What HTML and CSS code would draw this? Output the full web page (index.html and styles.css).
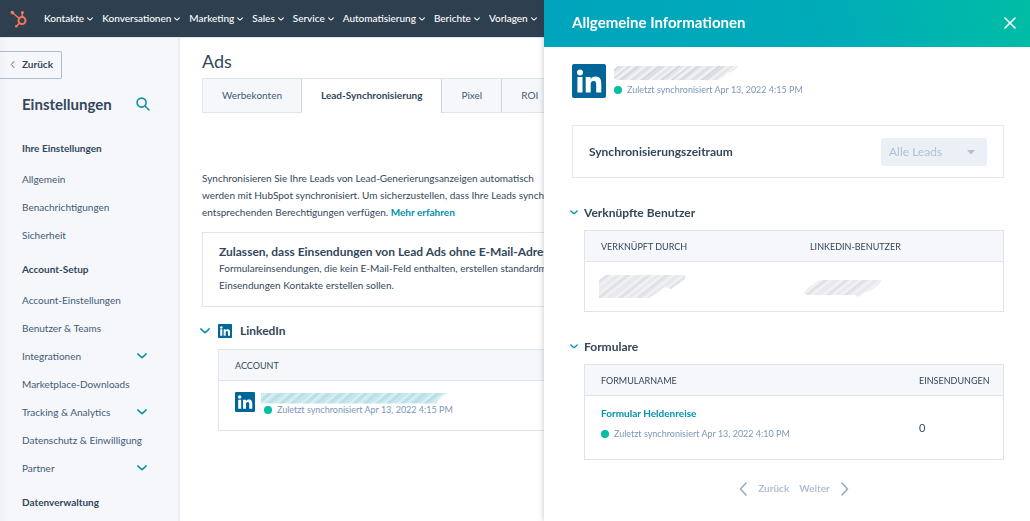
FILE: index.html
```html
<!DOCTYPE html>
<html lang="de">
<head>
<meta charset="utf-8">
<title>Ads – Einstellungen</title>
<link rel="stylesheet" href="styles.css">
</head>
<body>
<svg class="defs" aria-hidden="true">
  <symbol id="chevron" viewBox="0 0 10 6"><path d="M1 1 Q3 3.2 5 4.6 Q7 3.2 9 1" fill="none" stroke="currentColor" stroke-width="1.7" stroke-linecap="round" stroke-linejoin="round"/></symbol>
  <symbol id="angle" viewBox="0 0 8 14"><path d="M7 1 1.5 7 7 13" fill="none" stroke="currentColor" stroke-width="1.6" stroke-linecap="round" stroke-linejoin="round"/></symbol>
  <symbol id="linkedin" viewBox="0 0 34 34">
    <rect width="34" height="34" rx="2" fill="#006699"/>
    <circle cx="8" cy="8.400" r="3" fill="#fff"/>
    <path d="M5.400 13h5.100v15.500H5.400zM13.700 13h4.900v2.200c.8-1.400 2.500-2.600 4.900-2.600 4.900 0 5.800 3.200 5.800 7.400v8.500h-5.100v-7.600c0-1.900-.1-4-2.600-4s-2.900 1.900-2.900 3.900v7.700h-5z" fill="#fff"/>
  </symbol>
  <pattern id="hatch-grey" width="37" height="60" patternUnits="userSpaceOnUse" patternTransform="rotate(52)">
    <rect width="37" height="60" fill="#e4e6ea"/>
    <path d="M2 0v60M8.500 0v60M13 0v60M20 0v60M26.500 0v60M34 0v60" stroke="#f8f9fa" stroke-width="1.300"/>
    <path d="M4 0v60M16 0v60M29 0v60" stroke="#bcc1c9" stroke-width="0.800"/>
    <path d="M10.500 0v60M23 0v60M31.500 0v60" stroke="#cfd3d9" stroke-width="0.800"/>
  </pattern>
  <pattern id="hatch-pale" width="37" height="60" patternUnits="userSpaceOnUse" patternTransform="rotate(52)">
    <rect width="37" height="60" fill="#e7e9ed"/>
    <path d="M2 0v60M9 0v60M15 0v60M21 0v60M28 0v60M34 0v60" stroke="#f7f8fa" stroke-width="1.200"/>
    <path d="M5 0v60M18 0v60M31 0v60" stroke="#ced3da" stroke-width="0.800"/>
  </pattern>
  <pattern id="hatch-teal" width="31" height="60" patternUnits="userSpaceOnUse" patternTransform="rotate(50)">
    <rect width="31" height="60" fill="#c6e6eb"/>
    <path d="M3 0v60M9 0v60M18 0v60M25 0v60" stroke="#e8f6f8" stroke-width="1.100"/>
    <path d="M6 0v60M13 0v60M21 0v60M28 0v60" stroke="#a3d5dd" stroke-width="0.900"/>
  </pattern>
</svg>

<header class="topbar">
  <a class="logo" href="#" aria-label="HubSpot">
    <svg viewBox="0 0 18 18" fill="none" stroke="#f8765c">
      <circle cx="12" cy="10.600" r="3.500" stroke-width="2"/>
      <path d="M12.300 6.500V3M9 8.300 2.500 2.800M9.400 13.200 6.600 16" stroke-width="1.500"/>
      <g fill="#f8765c" stroke="none"><circle cx="12.400" cy="2.400" r="1.500"/><circle cx="2.300" cy="2.600" r="1.800"/><circle cx="6.300" cy="16.200" r="1.300"/></g>
    </svg>
  </a>
  <nav class="nav">
    <button type="button">Kontakte<svg><use href="#chevron"/></svg></button>
    <button type="button">Konversationen<svg><use href="#chevron"/></svg></button>
    <button type="button">Marketing<svg><use href="#chevron"/></svg></button>
    <button type="button">Sales<svg><use href="#chevron"/></svg></button>
    <button type="button">Service<svg><use href="#chevron"/></svg></button>
    <button type="button">Automatisierung<svg><use href="#chevron"/></svg></button>
    <button type="button">Berichte<svg><use href="#chevron"/></svg></button>
    <button type="button">Vorlagen<svg><use href="#chevron"/></svg></button>
  </nav>
</header>

<div class="layout">
  <aside class="sidebar">
    <button class="back" type="button"><svg><use href="#angle"/></svg>Zurück</button>
    <div class="side-title">
      <h2>Einstellungen</h2>
      <button type="button" aria-label="Suchen"><svg viewBox="0 0 14 14" fill="none" stroke="#0e91a7" stroke-width="1.600" stroke-linecap="round"><circle cx="5.600" cy="5.600" r="4.500"/><path d="m9 9 4 4"/></svg></button>
    </div>
    <section class="group">
      <h3>Ihre Einstellungen</h3>
      <a href="#">Allgemein</a>
      <a href="#">Benachrichtigungen</a>
      <a href="#">Sicherheit</a>
    </section>
    <section class="group">
      <h3>Account-Setup</h3>
      <a href="#">Account-Einstellungen</a>
      <a href="#">Benutzer &amp; Teams</a>
      <a href="#">Integrationen<svg><use href="#chevron"/></svg></a>
      <a href="#">Marketplace-Downloads</a>
      <a href="#">Tracking &amp; Analytics<svg><use href="#chevron"/></svg></a>
      <a href="#">Datenschutz &amp; Einwilligung</a>
      <a href="#">Partner<svg><use href="#chevron"/></svg></a>
    </section>
    <section class="group">
      <h3>Datenverwaltung</h3>
    </section>
  </aside>

  <main class="main">
    <h1>Ads</h1>
    <div class="tabs" role="tablist">
      <button type="button" role="tab">Werbekonten</button>
      <button type="button" role="tab" class="active" aria-selected="true">Lead-Synchronisierung</button>
      <button type="button" role="tab">Pixel</button>
      <button type="button" role="tab">ROI</button>
    </div>
    <p class="intro">Synchronisieren Sie Ihre Leads von Lead-Generierungsanzeigen automatisch<br>werden mit HubSpot synchronisiert. Um sicherzustellen, dass Ihre Leads synchronisiert<br>entsprechenden Berechtigungen verfügen. <a href="#">Mehr erfahren</a></p>
    <section class="notice">
      <h2>Zulassen, dass Einsendungen von Lead Ads ohne E-Mail-Adresse</h2>
      <p>Formulareinsendungen, die kein E-Mail-Feld enthalten, erstellen standardmäßig<br>Einsendungen Kontakte erstellen sollen.</p>
    </section>
    <button class="network" type="button"><svg class="toggle"><use href="#chevron"/></svg><svg class="brand"><use href="#linkedin"/></svg>LinkedIn</button>
    <table class="table accounts">
      <thead><tr><th>ACCOUNT</th></tr></thead>
      <tbody><tr><td>
        <div class="account">
          <svg class="brand"><use href="#linkedin"/></svg>
          <div>
            <svg class="scribble" viewBox="0 0 186 11"><path d="M0 0H186L179 5 175 10.500H0Z" fill="url(#hatch-teal)"/></svg>
            <div class="status">Zuletzt synchronisiert Apr 13, 2022 4:15 PM</div>
          </div>
        </div>
      </td></tr></tbody>
    </table>
  </main>
</div>

<aside class="drawer" role="dialog" aria-labelledby="drawer-title">
  <header class="drawer-head">
    <h2 id="drawer-title">Allgemeine Informationen</h2>
    <button type="button" aria-label="Schließen"><svg viewBox="0 0 12 12" fill="none" stroke="#fff" stroke-width="1.600" stroke-linecap="round"><path d="m1 1 10 10M11 1 1 11"/></svg></button>
  </header>
  <div class="drawer-body">
    <div class="profile">
      <svg class="brand"><use href="#linkedin"/></svg>
      <div>
        <svg class="scribble" viewBox="0 0 124 16"><path d="M4 1H124L120 5 114 8 109 12 104 15H2L0 13V4Z" fill="url(#hatch-grey)"/></svg>
        <div class="status">Zuletzt synchronisiert Apr 13, 2022 4:15 PM</div>
      </div>
    </div>
    <div class="period">
      <label for="period">Synchronisierungszeitraum</label>
      <div class="select"><select id="period" disabled><option>Alle Leads</option></select><svg viewBox="0 0 8 5"><path d="M0 0h8L4 4.500z" fill="#b3bfce"/></svg></div>
    </div>

    <section class="block">
      <button class="block-title" type="button"><svg><use href="#chevron"/></svg>Verknüpfte Benutzer</button>
      <table class="table users">
        <thead><tr><th>VERKNÜPFT DURCH</th><th>LINKEDIN-BENUTZER</th></tr></thead>
        <tbody><tr>
          <td><svg class="scribble" viewBox="0 0 86 24"><path d="M7 0H86V4L79 9 72 14 66 12 58 18 50 23H0V5Z" fill="url(#hatch-pale)"/></svg></td>
          <td><svg class="scribble" viewBox="0 0 86 24"><path d="M15 6 20 5H79L75 10 68 15 61 18 55 22 52 20H4L0 18 6 12Z" fill="url(#hatch-pale)"/></svg></td>
        </tr></tbody>
      </table>
    </section>

    <section class="block">
      <button class="block-title" type="button"><svg><use href="#chevron"/></svg>Formulare</button>
      <table class="table forms">
        <thead><tr><th>FORMULARNAME</th><th>EINSENDUNGEN</th></tr></thead>
        <tbody><tr>
          <td><a href="#">Formular Heldenreise</a><div class="status">Zuletzt synchronisiert Apr 13, 2022 4:10 PM</div></td>
          <td>0</td>
        </tr></tbody>
      </table>
    </section>

    <div class="pager">
      <button type="button" disabled><svg><use href="#angle"/></svg>Zurück</button>
      <button type="button" disabled>Weiter<svg class="flip"><use href="#angle"/></svg></button>
    </div>
  </div>
</aside>
</body>
</html>
```
FILE: styles.css
```css
* { box-sizing: border-box; }

body {
  margin: 0;
  height: 100vh;
  overflow: hidden;
  display: flex;
  flex-direction: column;
  font: 400 10px/17px Lato, "Open Sans", sans-serif;
  color: #33475b;
  background: #fff;
}

h1, h2, h3, p { margin: 0; }
button { margin: 0; padding: 0; border: 0; background: none; font: inherit; color: inherit; }
a { color: inherit; text-decoration: none; }
svg { display: block; flex: none; }
.defs { position: absolute; width: 0; height: 0; }

/* Top navigation */
.topbar {
  flex: none;
  display: flex;
  align-items: center;
  height: 37px;
  padding-left: 10px;
  background: #2e3f50;
  color: #fff;
}
.logo svg { width: 18px; height: 18px; }
.nav { display: flex; gap: 9px; margin-left: 16px; }
.nav button { display: flex; align-items: center; gap: 3px; font-weight: 500; white-space: nowrap; }
.nav svg { width: 6px; height: 4px; }

.layout { flex: 1; display: flex; min-height: 0; border-top: 1px solid #dfe3eb; }

/* Settings sidebar */
.sidebar {
  flex: none;
  width: 180px;
  padding-top: 13px;
  overflow: hidden;
  background: linear-gradient(90deg, #f0f2f7, #f5f7fb 10px);
  border-right: 2px solid #eaeef4;
}
.back {
  display: flex;
  align-items: center;
  gap: 7px;
  height: 28px;
  padding: 0 8px 1px 10px;
  border: 1px solid #a9bbcf;
  border-left: 0;
  border-radius: 0 2px 2px 0;
  font-weight: 700;
}
.back svg { width: 5px; height: 7px; }
.side-title { display: flex; align-items: center; justify-content: space-between; height: 28px; margin-top: 11px; padding: 0 28px 0 22px; }
.side-title h2 { font-size: 15px; font-weight: 700; }
.side-title svg { width: 14px; height: 14px; }
.group { padding: 0 31px 0 22px; margin-top: 6px; }
.side-title + .group { margin-top: 16px; }
.group h3 { margin-bottom: 3px; font-size: 10px; line-height: 28px; font-weight: 700; }
.group a { display: flex; align-items: center; justify-content: space-between; line-height: 28px; white-space: nowrap; color: #425b76; }
.group svg { width: 10px; height: 6px; color: #0e91a7; }

/* Main column */
.main { flex: 1; min-width: 0; padding: 11px 22px; white-space: nowrap; overflow: hidden; }
h1 { font-size: 18px; line-height: 24px; font-weight: 400; }
.tabs { display: flex; height: 35px; margin-top: 5px; border: 1px solid #dfe3eb; background: #f5f7fb; }
.tabs button { padding: 0 19px 1px; border-right: 1px solid #cbd6e2; color: #425b76; }
.tabs .active { margin-bottom: -1px; background: #fff; color: #33475b; font-weight: 700; }
.intro { margin-top: 57px; }
.main a, .forms a { color: #0091ae; font-weight: 700; }
.notice { height: 75px; margin-top: 11px; padding: 10px 16px; border: 1px solid #dfe3eb; }
.notice h2 { font-size: 12px; line-height: 17px; font-weight: 700; }
.network { display: flex; align-items: center; height: 15px; margin: 16px 0 11px -2px; font-size: 12px; font-weight: 700; }
.network .toggle { width: 10px; height: 6px; margin-right: 8px; color: #0091ae; }
.network .brand { width: 14px; height: 14px; margin-right: 8px; }

/* Tables */
.table { width: 100%; border-collapse: separate; border-spacing: 0; border: 1px solid #dfe3eb; text-align: left; table-layout: fixed; }
.table th { height: 31px; padding: 1px 16px 0; background: #f5f7fb; border-bottom: 1px solid #dfe3eb; font-size: 9px; font-weight: 400; }
.table td { padding: 0 16px; }
.accounts { width: calc(100% - 16px); margin-left: 16px; }
.accounts td { height: 49px; }
.account, .profile { display: flex; gap: 6px; }
.account { margin-top: -4px; }
.account .brand { width: 20px; height: 20px; margin-top: 1px; }
.account .scribble { width: 186px; height: 11px; margin-top: 2px; }
.account .status { padding-left: 3px; }
.status { display: flex; align-items: center; gap: 5px; font-size: 9px; line-height: 12px; white-space: nowrap; color: #7c98b6; }
.status::before { content: ""; width: 8px; height: 8px; border-radius: 50%; background: #00bda5; }

/* Detail drawer */
.drawer {
  position: fixed;
  top: 0;
  right: 0;
  bottom: 0;
  width: 486px;
  max-width: 100%;
  overflow: hidden;
  background: #fff;
  box-shadow: 0 0 6px rgba(45, 62, 80, .3);
}
.drawer-head {
  display: flex;
  align-items: center;
  justify-content: space-between;
  height: 47px;
  padding: 0 14px 2px 28px;
  background: linear-gradient(75deg, #00a4bd, #00acb8 60%, #00bda5);
  color: #fff;
}
.drawer-head h2 { font-size: 15px; font-weight: 700; }
.drawer-head svg { width: 12px; height: 12px; }
.drawer-body { padding: 17px 26px 0 28px; }
.profile { gap: 8px; }
.profile .brand { width: 34px; height: 34px; }
.profile .scribble { width: 124px; height: 16px; margin: 1px 0 3px; }
.period { display: flex; align-items: center; justify-content: space-between; height: 53px; margin-top: 27px; padding: 0 16px; border: 1px solid #e5e9ef; }
.period label { font-size: 12px; font-weight: 700; }
.select { position: relative; width: 106px; height: 28px; }
.select select { appearance: none; width: 100%; height: 100%; padding: 0 8px; border: 0; border-radius: 2px; background: #eaf0f6; color: #b0c1d4; font: inherit; font-size: 12px; opacity: 1; }
.select svg { position: absolute; right: 12px; top: 12px; width: 8px; height: 5px; }
.block { padding-left: 12px; margin-top: 25px; }
.block-title { display: flex; align-items: center; gap: 6px; height: 18px; margin: 0 0 9px -14px; font-size: 12px; font-weight: 700; }
.block-title svg { width: 8px; height: 5px; color: #0091ae; }
.users td { height: 49px; padding: 0 10px 0 14px; }
.users td:last-child { padding-left: 9px; }
.users .scribble { width: 86px; height: 24px; }
.forms th:last-child { width: 100px; }
.forms td { height: 63px; }
.forms td:first-child { padding-top: 9px; vertical-align: top; }
.forms td:last-child { font-size: 11px; }
.forms .status { margin-top: 6px; }
.pager { display: flex; justify-content: center; gap: 10px; margin-top: 20px; padding-left: 12px; color: #b0c1d4; font-weight: 700; }
.pager button { display: flex; align-items: center; gap: 11px; }
.pager svg { width: 8px; height: 14px; color: #99acc2; }
.flip { transform: scaleX(-1); }
```
